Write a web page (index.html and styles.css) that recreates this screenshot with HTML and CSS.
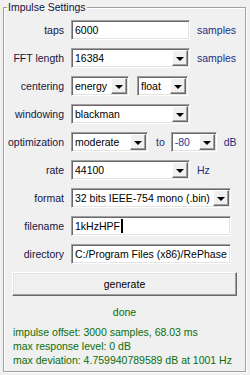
FILE: index.html
```html
<!DOCTYPE html>
<html lang="en">
<head>
  <meta charset="UTF-8">
  <title>Impulse Settings</title>
  <link rel="stylesheet" href="styles.css">
</head>
<body>
  <!-- 임펄스 설정 그룹박스 -->
  <fieldset class="group">
    <legend>Impulse Settings</legend>

    <div class="row">
      <span class="lbl">taps</span>
      <div class="edit w-wide">6000</div>
      <span class="unit">samples</span>
    </div>

    <div class="row">
      <span class="lbl">FFT length</span>
      <div class="combo w-wide"><span class="val">16384</span><span class="arr"></span></div>
      <span class="unit">samples</span>
    </div>

    <div class="row">
      <span class="lbl">centering</span>
      <div class="combo w-energy"><span class="val">energy</span><span class="arr"></span></div>
      <div class="combo w-float"><span class="val">float</span><span class="arr"></span></div>
    </div>

    <div class="row">
      <span class="lbl">windowing</span>
      <div class="combo w-wide"><span class="val">blackman</span><span class="arr"></span></div>
    </div>

    <div class="row">
      <span class="lbl">optimization</span>
      <div class="combo w-moderate"><span class="val">moderate</span><span class="arr"></span></div>
      <span class="unit to">to</span>
      <div class="combo w-db"><span class="val blue">-80</span><span class="arr"></span></div>
      <span class="unit">dB</span>
    </div>

    <div class="row">
      <span class="lbl">rate</span>
      <div class="combo w-wide"><span class="val">44100</span><span class="arr"></span></div>
      <span class="unit">Hz</span>
    </div>

    <div class="row">
      <span class="lbl">format</span>
      <div class="combo w-full"><span class="val">32 bits IEEE-754 mono (.bin)</span><span class="arr"></span></div>
    </div>

    <div class="row">
      <span class="lbl">filename</span>
      <div class="edit w-full">1kHzHPF<span class="caret"></span></div>
    </div>

    <div class="row">
      <span class="lbl">directory</span>
      <div class="edit w-full">C:/Program Files (x86)/RePhase</div>
    </div>

    <button class="gen">generate</button>

    <!-- 결과 메시지 -->
    <p class="done">done</p>
    <div class="info">
      <p>impulse offset: 3000 samples, 68.03 ms</p>
      <p>max response level: 0 dB</p>
      <p>max deviation: 4.759940789589 dB at 1001 Hz</p>
    </div>
  </fieldset>
</body>
</html>
```

FILE: styles.css
```css
html, body{
  margin: 0;
  padding: 0;
}

body{
  width: 250px;
  height: 375px;
  background-color: #f0f0f0;
  font-family: "Liberation Sans", Arial, sans-serif;
  font-size: 10.5px;
  color: #000;
  overflow: hidden;
}

/* 그룹박스 (에칭 테두리) */
.group{
  box-sizing: border-box;
  width: 243px;
  height: 372px;
  margin: 0 0 0 3px;
  padding: 6px 0 0 0;
  border: 1px solid #a0a0a0;
  box-shadow: inset 1px 1px #fff, 1px 1px #fff;
}
.group legend{
  margin-left: 3px;
  padding: 0 1px;
  line-height: 14px;
  color: #10103a;
}

/* 한 줄: 라벨 + 컨트롤 */
.row{
  display: flex;
  align-items: center;
  height: 20px;
  margin-bottom: 8px;
}
.lbl{
  width: 60px;
  margin-right: 7px;
  text-align: right;
  color: #15153f;
}
.unit{
  margin-left: 7px;
  color: #1d2f80;
}
.unit.to{
  margin-left: 8px;
  margin-right: 6px;
}

/* 에디트 박스 (움푹 들어간 테두리) */
.edit, .combo{
  box-sizing: border-box;
  height: 20px;
  background-color: #fff;
  border: 1px solid;
  border-color: #a0a0a0 #fff #fff #a0a0a0;
  box-shadow: inset 1px 1px #696969, inset -1px -1px #e3e3e3;
  white-space: nowrap;
  overflow: hidden;
}
.edit{
  display: flex;
  align-items: center;
  padding-left: 3px;
}
.caret{
  display: inline-block;
  width: 2px;
  height: 14px;
  margin-left: 1px;
  background-color: #000;
}

/* 콤보박스 */
.combo{
  display: flex;
  align-items: center;
  padding: 1px;
}
.combo .val{
  flex: 1;
  padding-left: 2px;
  overflow: hidden;
}
.combo .val.blue{
  color: #1f3c98;
}
.combo .arr{
  box-sizing: border-box;
  width: 16px;
  height: 16px;
  display: flex;
  align-items: center;
  justify-content: center;
  background-color: #f0f0f0;
  border: 1px solid;
  border-color: #fff #696969 #696969 #fff;
  box-shadow: inset -1px -1px #a0a0a0;
}
.combo .arr::after{
  content: '';
  border-left: 4px solid transparent;
  border-right: 4px solid transparent;
  border-top: 4px solid #000;
  margin-top: 1px;
}

/* 너비 */
.w-wide{ width: 119px; }
.w-full{ width: 160px; }
.w-energy{ width: 58px; margin-right: 8px; }
.w-float{ width: 51px; }
.w-moderate{ width: 77px; }
.w-db{ width: 46px; }

/* generate 버튼 */
.gen{
  display: block;
  box-sizing: border-box;
  width: 225px;
  height: 24px;
  margin: 1px 0 0 8px;
  padding: 0;
  font-family: inherit;
  font-size: 10.5px;
  color: #000;
  background-color: #f0f0f0;
  border: 1px solid;
  border-color: #fff #696969 #696969 #fff;
  box-shadow: inset -1px -1px #a0a0a0, inset 1px 1px #e3e3e3;
}

/* 결과 텍스트 */
.done{
  margin: 9px 0 0 0;
  line-height: 14px;
  text-align: center;
  color: #0b6e0b;
}
.info{
  margin: 6px 0 0 9px;
  color: #0b6e0b;
}
.info p{
  margin: 0;
  line-height: 14px;
  white-space: nowrap;
}
```
